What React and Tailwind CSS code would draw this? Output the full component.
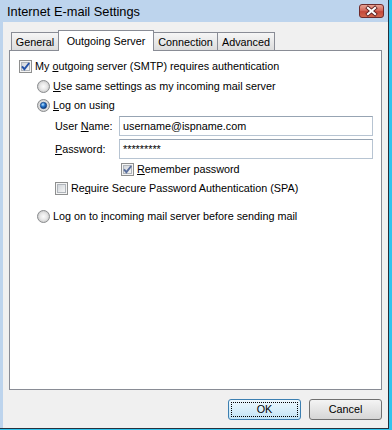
import React from 'react'

function Check({ checked, mark = '#2452a8' }) {
  return (
    <svg width="13" height="13" viewBox="0 0 13 13" className="shrink-0">
      <rect x="0.5" y="0.5" width="12" height="12" fill="#f4f4f4" stroke="#8e8f8f" />
      <rect x="2.5" y="2.5" width="8" height="8" fill="url(#cbFill)" stroke="#b0b5bb" />
      {checked && (
        <path d="M3 6.3 L5.4 9.2 L10.2 3" fill="none" stroke={mark} strokeWidth="1.9" />
      )}
    </svg>
  )
}

function Radio({ checked }) {
  return (
    <svg width="13" height="13" viewBox="0 0 13 13" className="shrink-0">
      <circle cx="6.5" cy="6.5" r="6" fill="url(#rdFill)" stroke="#8b8d8f" />
      {checked && <circle cx="6.5" cy="6.5" r="3.2" fill="url(#rdDot)" stroke="#173f7a" strokeWidth="0.7" />}
    </svg>
  )
}

function Row({ className, children }) {
  return <div className={`flex items-center h-[13px] gap-[3px] ${className}`}>{children}</div>
}

function Field({ label, value }) {
  return (
    <div className="flex items-center h-[20px] ml-[45px] mr-[8px]">
      <span className="w-[64px] shrink-0">{label}</span>
      <div className="flex-1 h-full flex items-center pl-[3px] bg-white border border-[#b7c4d2] border-t-[#97a4b3]">
        {value}
      </div>
    </div>
  )
}

export default function App() {
  const tabs = [
    { name: 'General', w: 'w-[48px]' },
    { name: 'Outgoing Server', w: 'w-[96px]', active: true },
    { name: 'Connection', w: 'w-[65px]' },
    { name: 'Advanced', w: 'w-[58px]' },
  ]

  return (
    <div className="w-[392px] h-[430px] bg-[#30c4ee] pr-[3px] pb-px font-['Liberation_Sans',Arial,sans-serif] text-[10.8px] leading-[13px] text-black">
      <svg width="0" height="0" className="absolute">
        <defs>
          <linearGradient id="cbFill" x1="0" y1="0" x2="1" y2="1">
            <stop offset="0" stopColor="#cfd3d8" />
            <stop offset="1" stopColor="#f7f7f7" />
          </linearGradient>
          <radialGradient id="rdFill" cx="0.5" cy="0.5" r="0.5">
            <stop offset="0" stopColor="#fbfbfb" />
            <stop offset="0.6" stopColor="#e6e6e6" />
            <stop offset="1" stopColor="#c9c9c9" />
          </radialGradient>
          <radialGradient id="rdDot" cx="0.4" cy="0.35" r="0.6">
            <stop offset="0" stopColor="#bfe6ff" />
            <stop offset="0.5" stopColor="#2a7ad0" />
            <stop offset="1" stopColor="#0d3f86" />
          </radialGradient>
          <linearGradient id="xBtn" x1="0" y1="0" x2="0" y2="1">
            <stop offset="0" stopColor="#e9a99b" />
            <stop offset="0.45" stopColor="#d46a5c" />
            <stop offset="0.55" stopColor="#c4483a" />
            <stop offset="1" stopColor="#d36a4f" />
          </linearGradient>
        </defs>
      </svg>

      <div className="h-full flex flex-col bg-[#bdd4ed] border-r border-b border-[#26313d]">
        {/* Title bar */}
        <div className="h-[22px] shrink-0 flex items-center justify-between pl-[7px] pr-[4px]">
          <span className="text-[12.8px]">Internet E-mail Settings</span>
          <svg width="25" height="14" viewBox="0 0 25 14">
            <rect x="0.5" y="0.5" width="24" height="13" rx="2.5" fill="url(#xBtn)" stroke="#6e2b2b" />
            <path d="M9 4 L16 10 M16 4 L9 10" stroke="#5b2020" strokeWidth="3.8" strokeLinecap="square" />
            <path d="M9 4 L16 10 M16 4 L9 10" stroke="#ffffff" strokeWidth="2.2" strokeLinecap="square" />
          </svg>
        </div>

        {/* Client area */}
        <div className="flex-1 ml-[3px] bg-[#f0f0f0] flex flex-col pt-[8px]">
          <div className="flex items-end h-[20px] ml-[8px]">
            {tabs.map((t) =>
              t.active ? (
                <div
                  key={t.name}
                  className={`${t.w} -ml-px h-[21px] -mb-px relative z-10 flex items-center justify-center bg-white border border-b-0 border-[#898c95]`}
                >
                  {t.name}
                </div>
              ) : (
                <div
                  key={t.name}
                  className={`${t.w} -ml-px first:ml-0 h-[18px] flex items-center justify-center pt-px bg-linear-to-b from-[#f6f6f6] to-[#dcdcdc] border border-b-0 border-[#898c95]`}
                >
                  {t.name}
                </div>
              )
            )}
          </div>

          {/* Tab panel */}
          <div className="h-[340px] ml-[6px] mr-[6px] bg-white border border-[#898c95] flex flex-col">
            <Row className="mt-[9px] ml-[9px]">
              <Check checked />
              <span>
                My <u>o</u>utgoing server (SMTP) requires authentication
              </span>
            </Row>
            <Row className="mt-[7px] ml-[27px]">
              <Radio />
              <span>
                <u>U</u>se same settings as my incoming mail server
              </span>
            </Row>
            <Row className="mt-[6px] ml-[27px]">
              <Radio checked />
              <span>
                <u>L</u>og on using
              </span>
            </Row>
            <div className="mt-[4px]">
              <Field
                label={
                  <>
                    User <u>N</u>ame:
                  </>
                }
                value="username@ispname.com"
              />
            </div>
            <div className="mt-[3px]">
              <Field
                label={
                  <>
                    <u>P</u>assword:
                  </>
                }
                value="*********"
              />
            </div>
            <Row className="mt-[4px] ml-[111px]">
              <Check checked mark="#5a6f9e" />
              <span>
                <u>R</u>emember password
              </span>
            </Row>
            <Row className="mt-[6px] ml-[45px]">
              <Check />
              <span>
                Re<u>q</u>uire Secure Password Authentication (SPA)
              </span>
            </Row>
            <Row className="mt-[15px] ml-[27px]">
              <Radio />
              <span>
                Log on to <u>i</u>ncoming mail server before sending mail
              </span>
            </Row>
          </div>

          {/* Buttons */}
          <div className="flex justify-end gap-[8px] mt-[9px] pr-[6px]">
            <button className="w-[73px] h-[21px] rounded-[3px] border border-[#3c7fb1] bg-linear-to-b from-[#eef8fd] to-[#c2e4f6] p-[2px]">
              <div className="w-full h-full border border-dotted border-black flex items-center justify-center">OK</div>
            </button>
            <button className="w-[73px] h-[21px] rounded-[3px] border border-[#707070] bg-linear-to-b from-[#f4f4f4] to-[#d6d6d6] flex items-center justify-center">
              Cancel
            </button>
          </div>
        </div>
      </div>
    </div>
  )
}
